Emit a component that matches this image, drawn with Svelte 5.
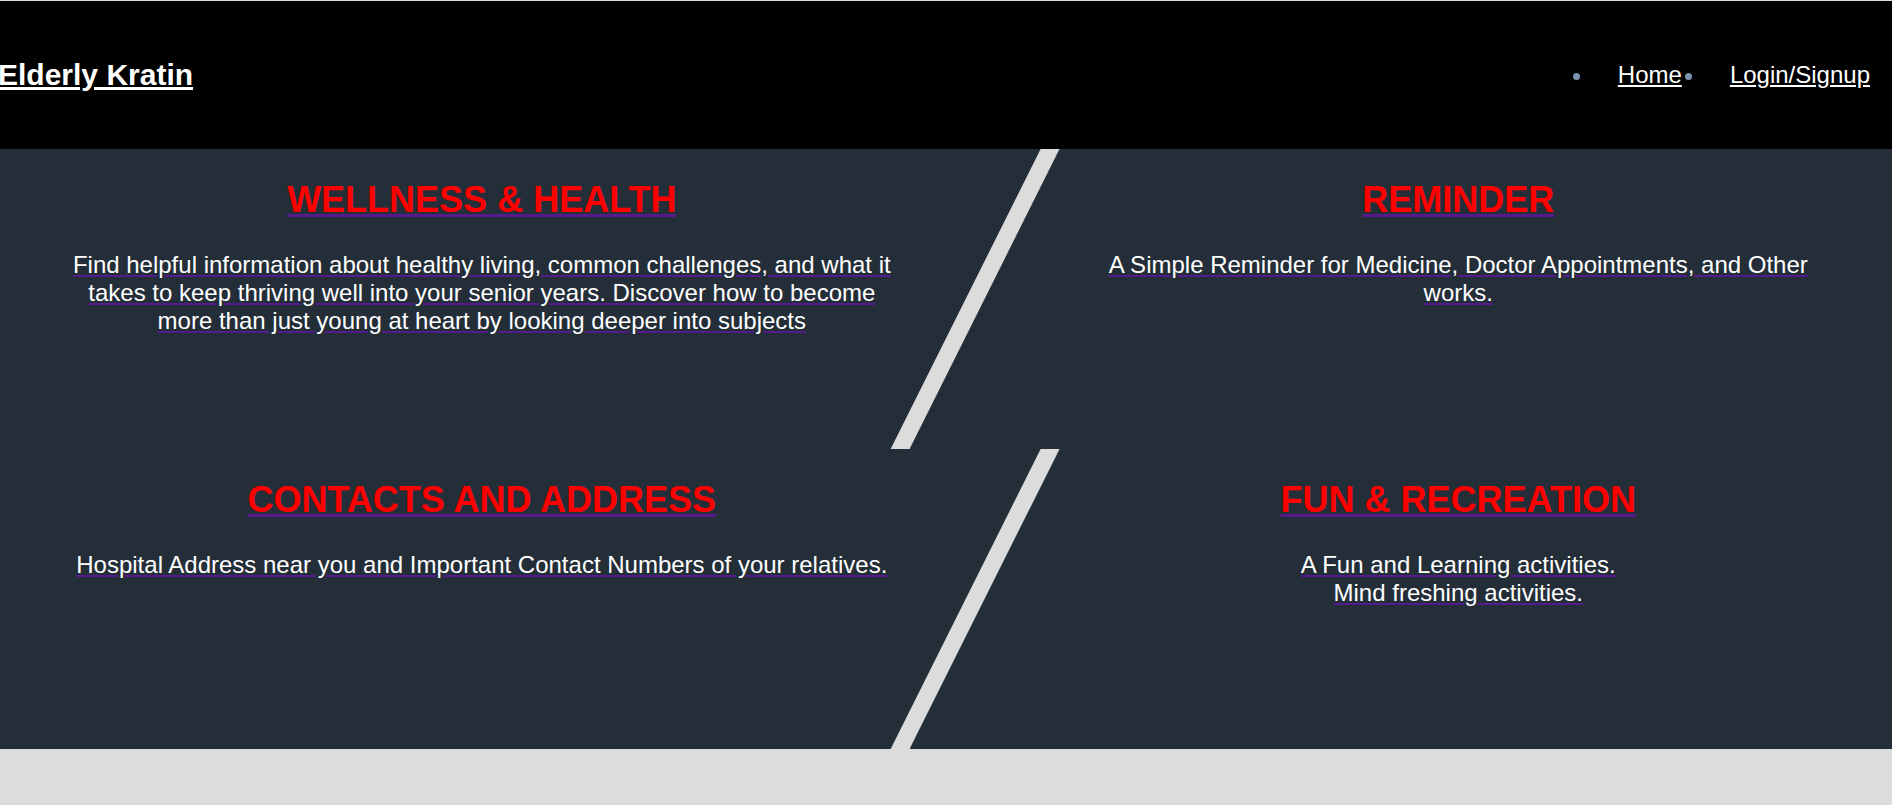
<script>
  const navigation = [
    { label: 'Home', href: '#home' },
    { label: 'Login/Signup', href: '#login' }
  ];

  const rows = [
    [
      {
        title: 'WELLNESS & HEALTH',
        href: '#wellness',
        lines: [
          'Find helpful information about healthy living, common challenges, and what it takes to keep thriving well into your senior years. Discover how to become more than just young at heart by looking deeper into subjects'
        ]
      },
      {
        title: 'REMINDER',
        href: '#reminder',
        lines: ['A Simple Reminder for Medicine, Doctor Appointments, and Other works.']
      }
    ],
    [
      {
        title: 'CONTACTS AND ADDRESS',
        href: '#contacts',
        lines: ['Hospital Address near you and Important Contact Numbers of your relatives.']
      },
      {
        title: 'FUN & RECREATION',
        href: '#recreation',
        lines: ['A Fun and Learning activities.', 'Mind freshing activities.']
      }
    ]
  ];
</script>

<header>
  <a class="brand" href="#home">Elderly Kratin</a>
  <nav>
    <ul>
      {#each navigation as item}
        <li><a href={item.href}>{item.label}</a></li>
      {/each}
    </ul>
  </nav>
</header>

<main>
  {#each rows as row}
    <section class="row">
      {#each row as card}
        <div class="panel">
          <a href={card.href}>
            <h2>{card.title}</h2>
            <p>
              {#each card.lines as line, i}{#if i > 0}<br />{/if}{line}{/each}
            </p>
          </a>
        </div>
      {/each}
    </section>
  {/each}
</main>

<style>
  :global(body) {
    margin: 0;
    background: #dcdcdc;
    font-family: 'Liberation Sans', Arial, sans-serif;
    font-size: 24px;
    line-height: 28px;
  }

  header {
    display: flex;
    align-items: center;
    justify-content: space-between;
    box-sizing: border-box;
    min-height: 148px;
    margin-top: 1px;
    padding-right: 22px;
    background: #000;
  }

  .brand {
    margin-left: -2px;
    color: #fff;
    font-size: 30px;
    font-weight: bold;
  }

  ul {
    display: flex;
    margin: 0;
    padding: 0;
  }

  li {
    margin-left: 24px;
    padding-left: 24px;
    color: #7b95b0;
  }

  li a {
    color: #fff;
  }

  .row {
    display: grid;
    grid-template-columns: 55% 44%;
    justify-content: space-between;
  }

  .panel {
    box-sizing: border-box;
    min-height: 300px;
    padding: 30px 147px 30px 70px;
    background: #242e38;
    text-align: center;
    clip-path: polygon(0 0, 100% 0, calc(100% - 150px) 100%, 0 100%);
  }

  .panel:last-child {
    margin-left: -150px;
    padding: 30px 75px 30px 190px;
    clip-path: polygon(150px 0, 100% 0, 100% 100%, 0 100%);
  }

  .panel a {
    color: #551a8b;
  }

  h2 {
    margin: 0 0 30px;
    color: #f00;
    font-size: 36px;
    line-height: 42px;
  }

  p {
    margin: 0;
    color: #fff;
  }
</style>
